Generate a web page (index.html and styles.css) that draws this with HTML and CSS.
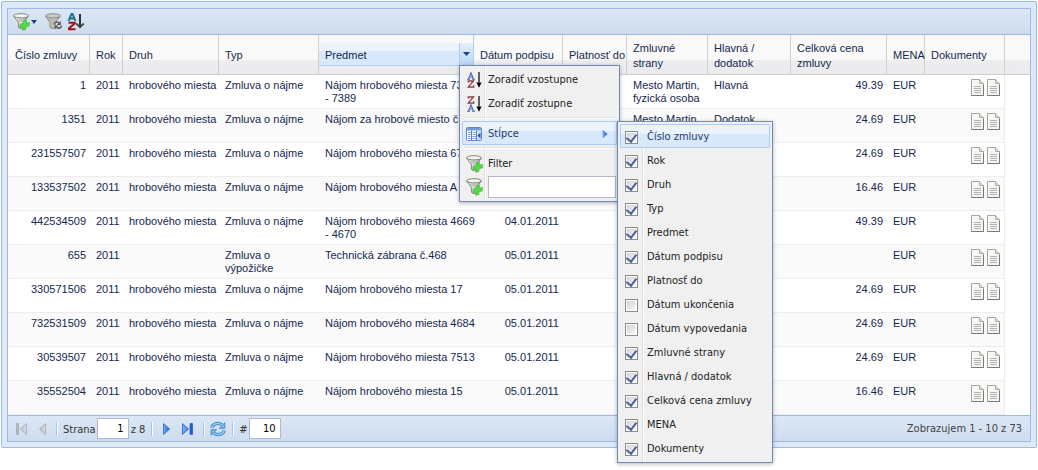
FILE: index.html
```html
<!DOCTYPE html>
<html lang="sk">
<head>
<meta charset="utf-8">
<title>Zmluvy</title>
<link rel="stylesheet" href="styles.css">
</head>
<body>
<svg class="defs" aria-hidden="true">
  <linearGradient id="g-funnel" x1="0" x2="1" y1="0" y2="0"><stop offset="0" stop-color="#fff"/><stop offset=".6" stop-color="#d4d4d0"/><stop offset="1" stop-color="#8e8e8a"/></linearGradient>
  <linearGradient id="g-blue" x1="0" x2="1" y1="0" y2="0"><stop offset="0" stop-color="#7db4f5"/><stop offset="1" stop-color="#1a4fc4"/></linearGradient>
  <linearGradient id="g-gray" x1="0" x2="1" y1="0" y2="0"><stop offset="0" stop-color="#b4b8be"/><stop offset="1" stop-color="#d8dbe0"/></linearGradient>
  <symbol id="funnel" viewBox="0 0 16 16">
    <path d="M.6 3 5.400 9.500V14l1 1.300h3.200l1-1.300V9.500L15.400 3z" fill="url(#g-funnel)" stroke="#858580"/>
    <ellipse cx="8" cy="2.800" rx="7.400" ry="2.100" fill="#f4f4f1" stroke="#858580"/>
    <path d="M4 6.200h6M5 8h4" stroke="#b4b4ae" fill="none"/>
  </symbol>
  <symbol id="funnel-add" viewBox="0 0 18 18">
    <use href="#funnel" width="16" height="16"/>
    <path d="M10.200 7.600l3.200-.6v3l3.200-.5-.4 3.600-3 .5-.4 3-3.200.6.3-3-3.200.5.400-3.600 3-.5z" fill="#55d84c" stroke="#3db536" stroke-width=".6"/>
  </symbol>
  <symbol id="funnel-refresh" viewBox="0 0 18 18">
    <path d="M.6 3 4.900 9.500V14l1 1.300h3.400l1-1.300V9.500L15.400 3z" fill="#bdbdb8" stroke="#8f8f8a"/>
    <ellipse cx="8" cy="2.800" rx="7.400" ry="2.100" fill="#c9c9c5" stroke="#8f8f8a"/>
    <path d="M9.200 11.500c0-2 2.500-3.200 4.600-1.800M16.500 12.500c0 2.200-2.600 3.400-4.800 2" fill="none" stroke="#666" stroke-width="1.700"/>
    <path d="M15.800 8v4h-4zM9.700 16.400v-4h4z" fill="#555"/>
  </symbol>
  <symbol id="sort-bold" viewBox="0 0 18 18">
    <path d="M1.500 8 4.500 1h1l3 7M2.800 5.500h4.500" fill="none" stroke="#18708c" stroke-width="1.900"/>
    <path d="M1.500 9.800h6.200v.8L2 15.300v.9h6.500" fill="none" stroke="#a01018" stroke-width="2"/>
    <path d="M13 1v13" stroke="#333" stroke-width="2"/><path d="M9.200 10.500 13 14.300l3.800-3.800" fill="none" stroke="#444" stroke-width="1.800"/>
  </symbol>
  <symbol id="letter-a" viewBox="0 0 8 8"><path d="M1.500 7 4 1l2.500 6M2.300 5h3M0 7.200h3M5 7.200h3M3 1h1.500" fill="none" stroke="#4564b0" stroke-width="1.100"/></symbol>
  <symbol id="letter-z" viewBox="0 0 8 8"><path d="M1.200 2.600V1h5.300L1.200 7h5.500V5.200" fill="none" stroke="#8e4149" stroke-width="1.300"/></symbol>
  <symbol id="arrow-down" viewBox="0 0 6 16"><path d="M3 0v12" stroke="#000" stroke-width="1.200"/><path d="M.3 10.200 3 11l2.700-.8L3 15.800z" fill="#000"/></symbol>
  <symbol id="columns" viewBox="0 0 16 14">
    <rect x=".5" y=".5" width="15" height="13" rx="1" fill="#fff" stroke="#6288c8"/>
    <path d="M1 1h14v2.500H1z" fill="#6f9be0"/><path d="M5.500 3.500V13M10.500 3.500V13" stroke="#5580cc"/>
    <path d="M2 5.500h2.500M2 7.500h2.500M2 9.500h2.500M2 11.500h2.500M6.500 5.500H10M6.500 7.500H10M6.500 9.500H10M6.500 11.500H10" stroke="#79a3dd"/>
    <path d="M11 4h4v9h-4z" fill="#cfe2fb"/><path d="M14.500 5.500v6L11.500 8.500z" fill="#1d50b8"/>
  </symbol>
  <symbol id="doc" viewBox="0 0 13 17">
    <path d="M.5.500h8l4 4v12H.500z" fill="#f7f7f5" stroke="#a4a49f"/><path d="M.5 16.500h12V6" fill="none" stroke="#777"/>
    <path d="M8.500.500v4h4" fill="#dce6d2" stroke="#a6b09c"/><path d="M3 7.500h7M3 9.500h7M3 11.500h7M3 13.500h7" stroke="#b3b1ab"/>
  </symbol>
  <symbol id="tri" viewBox="0 0 7 12"><path d="M.5.500 6.500 6 .5 11.500z"/></symbol>
  <symbol id="refresh" viewBox="0 0 16 16">
    <path d="M1.800 7C2.500 2.800 8 .8 11.800 3.800" fill="none" stroke="#2c77bd" stroke-width="3.200"/><path d="M1.800 7C2.500 2.800 8 .8 11.800 3.800" fill="none" stroke="#8fd0f5" stroke-width="1.700"/>
    <path d="M14.800 1.800v5.400H9.400z" fill="#78c0f0" stroke="#2c77bd" stroke-width=".8"/>
    <path d="M14.200 9C13.500 13.200 8 15.200 4.200 12.200" fill="none" stroke="#2c77bd" stroke-width="3.200"/><path d="M14.200 9C13.500 13.200 8 15.200 4.200 12.200" fill="none" stroke="#8fd0f5" stroke-width="1.700"/>
    <path d="M1.200 14.200V8.800h5.400z" fill="#78c0f0" stroke="#2c77bd" stroke-width=".8"/>
  </symbol>
</svg>

<main class="frame">
<div class="panel">
  <div class="toolbar">
    <button class="tool" type="button" aria-label="Pridať filter"><svg width="18" height="18"><use href="#funnel-add"/></svg><svg class="caret" width="6" height="4" viewBox="0 0 6 4"><path d="M0 0h6L3 4z" fill="#15428b"/></svg></button>
    <button class="tool" type="button" aria-label="Obnoviť filter"><svg width="18" height="18"><use href="#funnel-refresh"/></svg></button>
    <button class="tool" type="button" aria-label="Zoradiť"><svg width="18" height="18"><use href="#sort-bold"/></svg></button>
  </div>

  <table class="grid">
    <colgroup><col class="c-num"><col class="c-year"><col class="c-kind"><col class="c-type"><col class="c-subject"><col class="c-date"><col class="c-valid"><col class="c-party"><col class="c-main"><col class="c-price"><col class="c-cur"><col class="c-docs"><col></colgroup>
    <thead>
      <tr>
        <th>Číslo zmluvy</th><th>Rok</th><th>Druh</th><th>Typ</th>
        <th class="active">
          <div class="head-over"><span>Predmet</span><button class="trigger" type="button" aria-label="Ponuka stĺpca"><svg width="7" height="4" viewBox="0 0 7 4"><path d="M0 0h7L3.500 4z" fill="#15428b"/></svg></button></div>
          <div class="menu main-menu">
            <button class="item" type="button"><svg class="ico" width="18" height="18"><use href="#letter-a" x="1" y="1" width="8" height="8"/><use href="#letter-z" x="1" y="9" width="8" height="8"/><use href="#arrow-down" x="10" y="1" width="6" height="16"/></svg>Zoradiť vzostupne</button>
            <button class="item" type="button"><svg class="ico" width="18" height="18"><use href="#letter-z" x="1" y="1" width="8" height="8"/><use href="#letter-a" x="1" y="9" width="8" height="8"/><use href="#arrow-down" x="10" y="1" width="6" height="16"/></svg>Zoradiť zostupne</button>
            <hr>
            <div class="sub">
              <button class="item on" type="button"><svg class="ico" width="18" height="14"><use href="#columns" width="16" height="14"/></svg>Stĺpce<svg class="more" width="6" height="10" fill="url(#g-blue)"><use href="#tri"/></svg></button>
              <div class="menu sub-menu">
                <label class="item on"><input type="checkbox" checked>Číslo zmluvy</label>
                <label class="item"><input type="checkbox" checked>Rok</label>
                <label class="item"><input type="checkbox" checked>Druh</label>
                <label class="item"><input type="checkbox" checked>Typ</label>
                <label class="item"><input type="checkbox" checked>Predmet</label>
                <label class="item"><input type="checkbox" checked>Dátum podpisu</label>
                <label class="item"><input type="checkbox" checked>Platnosť do</label>
                <label class="item"><input type="checkbox">Dátum ukončenia</label>
                <label class="item"><input type="checkbox">Dátum vypovedania</label>
                <label class="item"><input type="checkbox" checked>Zmluvné strany</label>
                <label class="item"><input type="checkbox" checked>Hlavná / dodatok</label>
                <label class="item"><input type="checkbox" checked>Celková cena zmluvy</label>
                <label class="item"><input type="checkbox" checked>MENA</label>
                <label class="item"><input type="checkbox" checked>Dokumenty</label>
              </div>
            </div>
            <hr>
            <label class="item" for="filter"><svg class="ico" width="18" height="18"><use href="#funnel-add"/></svg>Filter</label>
            <div class="item field"><svg class="ico" width="18" height="18"><use href="#funnel-add"/></svg><input id="filter" type="text"></div>
          </div>
        </th>
        <th class="after">Dátum podpisu</th><th>Platnosť do</th><th>Zmluvné<br>strany</th><th>Hlavná /<br>dodatok</th><th>Celková cena<br>zmluvy</th><th>MENA</th><th>Dokumenty</th><th class="rest"></th>
      </tr>
    </thead>
    <tbody>
      <tr><td class="r">1</td><td>2011</td><td class="nw">hrobového miesta</td><td>Zmluva o nájme</td><td class="nw">Nájom hrobového miesta 7388<br>- 7389</td><td class="r"></td><td></td><td>Mesto Martin, fyzická osoba</td><td>Hlavná</td><td class="r">49.39</td><td>EUR</td><td class="docs"><svg><use href="#doc"/></svg><svg><use href="#doc"/></svg></td><td class="rest"></td></tr>
      <tr><td class="r">1351</td><td>2011</td><td class="nw">hrobového miesta</td><td>Zmluva o nájme</td><td class="nw">Nájom za hrobové miesto č.2</td><td class="r"></td><td></td><td>Mesto Martin</td><td>Dodatok</td><td class="r">24.69</td><td>EUR</td><td class="docs"><svg><use href="#doc"/></svg><svg><use href="#doc"/></svg></td><td class="rest"></td></tr>
      <tr><td class="r">231557507</td><td>2011</td><td class="nw">hrobového miesta</td><td>Zmluva o nájme</td><td class="nw">Nájom hrobového miesta 6760</td><td class="r"></td><td></td><td></td><td></td><td class="r">24.69</td><td>EUR</td><td class="docs"><svg><use href="#doc"/></svg><svg><use href="#doc"/></svg></td><td class="rest"></td></tr>
      <tr><td class="r">133537502</td><td>2011</td><td class="nw">hrobového miesta</td><td>Zmluva o nájme</td><td class="nw">Nájom hrobového miesta A 4</td><td class="r"></td><td></td><td></td><td></td><td class="r">16.46</td><td>EUR</td><td class="docs"><svg><use href="#doc"/></svg><svg><use href="#doc"/></svg></td><td class="rest"></td></tr>
      <tr><td class="r">442534509</td><td>2011</td><td class="nw">hrobového miesta</td><td>Zmluva o nájme</td><td class="nw">Nájom hrobového miesta 4669<br>- 4670</td><td class="r">04.01.2011</td><td></td><td></td><td></td><td class="r">49.39</td><td>EUR</td><td class="docs"><svg><use href="#doc"/></svg><svg><use href="#doc"/></svg></td><td class="rest"></td></tr>
      <tr><td class="r">655</td><td>2011</td><td></td><td>Zmluva o<br>výpožičke</td><td class="nw">Technická zábrana č.468</td><td class="r">05.01.2011</td><td></td><td></td><td></td><td></td><td>EUR</td><td class="docs"><svg><use href="#doc"/></svg><svg><use href="#doc"/></svg></td><td class="rest"></td></tr>
      <tr><td class="r">330571506</td><td>2011</td><td class="nw">hrobového miesta</td><td>Zmluva o nájme</td><td class="nw">Nájom hrobového miesta 17</td><td class="r">05.01.2011</td><td></td><td></td><td></td><td class="r">24.69</td><td>EUR</td><td class="docs"><svg><use href="#doc"/></svg><svg><use href="#doc"/></svg></td><td class="rest"></td></tr>
      <tr><td class="r">732531509</td><td>2011</td><td class="nw">hrobového miesta</td><td>Zmluva o nájme</td><td class="nw">Nájom hrobového miesta 4684</td><td class="r">05.01.2011</td><td></td><td></td><td></td><td class="r">24.69</td><td>EUR</td><td class="docs"><svg><use href="#doc"/></svg><svg><use href="#doc"/></svg></td><td class="rest"></td></tr>
      <tr><td class="r">30539507</td><td>2011</td><td class="nw">hrobového miesta</td><td>Zmluva o nájme</td><td class="nw">Nájom hrobového miesta 7513</td><td class="r">05.01.2011</td><td></td><td></td><td></td><td class="r">24.69</td><td>EUR</td><td class="docs"><svg><use href="#doc"/></svg><svg><use href="#doc"/></svg></td><td class="rest"></td></tr>
      <tr><td class="r">35552504</td><td>2011</td><td class="nw">hrobového miesta</td><td>Zmluva o nájme</td><td class="nw">Nájom hrobového miesta 15</td><td class="r">05.01.2011</td><td></td><td></td><td></td><td class="r">16.46</td><td>EUR</td><td class="docs"><svg><use href="#doc"/></svg><svg><use href="#doc"/></svg></td><td class="rest"></td></tr>
    </tbody>
  </table>

  <div class="pager">
    <button class="nav" type="button" aria-label="Prvá strana" disabled><svg width="11" height="12" fill="url(#g-gray)" stroke="#a3a8b0" stroke-width=".8"><path d="M.5.500h2v11h-2zM10.500.500 4.500 6l6 5.500z"/></svg></button>
    <button class="nav" type="button" aria-label="Predchádzajúca strana" disabled><svg width="7" height="12" fill="url(#g-gray)" stroke="#a3a8b0" stroke-width=".8"><path d="M6.500.500.500 6l6 5.500z"/></svg></button>
    <i class="sep"></i>
    <label for="page">Strana</label><input class="num" id="page" type="text" value="1"><span class="total">z 8</span>
    <i class="sep"></i>
    <button class="nav" type="button" aria-label="Ďalšia strana"><svg width="7" height="12" fill="url(#g-blue)" stroke="#2a5fcb" stroke-width=".8"><use href="#tri"/></svg></button>
    <button class="nav" type="button" aria-label="Posledná strana"><svg width="11" height="12" fill="url(#g-blue)" stroke="#2a5fcb" stroke-width=".8"><path d="M.5.500 6.500 6l-6 5.500zM8 .5h2.500v11H8z"/></svg></button>
    <i class="sep"></i>
    <button class="nav reload" type="button" aria-label="Obnoviť"><svg width="16" height="16"><use href="#refresh"/></svg></button>
    <i class="sep"></i>
    <label for="size">#</label><input class="num" id="size" type="text" value="10">
    <span class="status">Zobrazujem 1 - 10 z 73</span>
  </div>
</div>
</main>
</body>
</html>
```
FILE: styles.css
```css
* { box-sizing: border-box; }
:root {
  --ui: Tahoma, "DejaVu Sans Condensed", "Noto Sans", sans-serif;
  --grid: "Liberation Sans", Arial, sans-serif;
  --line: #99bbe8;
}
html { min-height: 100vh; background: #fff; }
body { min-height: 100vh; margin: 0; padding: 1px; font: 11px/13px var(--grid); color: #15284f; }
button { margin: 0; padding: 0; border: 0; background: none; font: inherit; color: inherit; }
svg { display: block; flex: none; }
.defs { position: absolute; width: 0; height: 0; }

.frame { padding: 6px 5px 5px; background: #dfe8f6; border: 1px solid var(--line); border-radius: 2px; }
.panel { border: 1px solid var(--line); background: #fff; }

.toolbar { display: flex; align-items: center; gap: 8px; height: 26px; padding: 0 5px; background: linear-gradient(#dbe7f5, #cedcee); border-bottom: 1px solid var(--line); }
.tool { display: flex; align-items: center; }
.tool + .tool + .tool { margin-left: -4px; }

.grid { width: 100%; table-layout: fixed; border-collapse: separate; border-spacing: 0; }
.c-num { width: 82px; }
.c-year { width: 33px; }
.c-kind { width: 96px; }
.c-type { width: 100px; }
.c-subject { width: 155px; }
.c-date { width: 89px; }
.c-valid { width: 64px; }
.c-party { width: 81px; }
.c-main { width: 83px; }
.c-price { width: 96px; }
.c-cur { width: 38px; }
.c-docs { width: 80px; }

th { height: 40px; padding: 2px 0 0 6px; text-align: left; vertical-align: middle; font-weight: normal; line-height: 15px; white-space: nowrap; background: linear-gradient(#f9f9f9 65%, #eeeeef 65%, #e8eaec); border-right: 1px solid #d0d0d0; border-bottom: 1px solid #d0d0d0; }
th:first-child { padding-left: 7px; }
th.rest { border-right: 0; }
th.active { position: relative; padding: 0; border-right-color: #aaccf6; }
.head-over { display: flex; height: 23px; padding-left: 6px; align-items: center; background: linear-gradient(#ebf3fd 8px, #d9e8fb 8px); border-bottom: 1px solid #aaccf6; }
.head-over span { padding-top: 2px; }
.trigger { display: grid; place-items: center; width: 14px; height: 22px; margin-left: auto; border-left: 1px solid #aaccf6; background: linear-gradient(#e4effd, #bcd6f8); }

td { height: 34px; padding: 4px 4px 3px 6px; vertical-align: top; border-bottom: 1px solid #ededed; }
tbody tr:nth-child(even) td { background: #fafafa; }
td.r { text-align: right; }
td.nw { white-space: nowrap; }
td.docs { border-right: 1px solid #ededed; text-align: right; white-space: nowrap; line-height: 0; }
td.docs svg { display: inline-block; width: 13px; height: 17px; margin-left: 3px; }
tbody tr td.rest { background: #fff; border: 0; }

.menu { position: absolute; z-index: 2; padding: 1px 2px 2px; font: 11px/14px var(--ui); color: #222; border: 1px solid #718bb7; background: linear-gradient(90deg, #f0f0f0 24px, #e0e0e0 24px, #e0e0e0 25px, #fff 25px, #fff 26px, #f0f0f0 26px); box-shadow: 0 1px 4px rgb(0 0 0 / 30%); }
.main-menu { left: 140px; top: 30px; width: 161px; }
.sub { position: relative; }
.sub-menu { left: 155px; top: 0; width: 156px; padding: 2px; z-index: 3; }
.item { display: flex; align-items: center; width: 100%; height: 24px; padding: 1px 3px 0; border: 1px solid transparent; text-align: left; }
.item.on { color: #233d6d; border-color: #aaccf6; background: linear-gradient(#ebf3fd 42%, #d9e8fb 42%); border-radius: 1px; }
.ico { margin-right: 4px; }
.more { margin: 0 5px 0 auto; }
.menu hr { height: 2px; margin: 2px 2px 2px 4px; border: 0; background: linear-gradient(#e0e0e0 1px, #fff 1px); }
.field { padding: 0 0 0 3px; }
.field input { flex: 1; min-width: 0; height: 22px; padding: 1px 3px; border: 1px solid #b5b8c8; background: #fff; font: inherit; }
.sub-menu input { appearance: none; flex: none; width: 13px; height: 13px; margin: 1px 9px 0 1px; border: 1px solid #8b8b8b; outline: 1px solid #fff; outline-offset: -2px; background: linear-gradient(135deg, #ccc, #fff); }
.sub-menu input:checked { display: grid; place-items: center; }
.sub-menu input:checked::before { content: ""; width: 5px; height: 8px; margin-bottom: 2px; border: solid #4a61a0; border-width: 0 2px 2px 0; transform: rotate(38deg); }

.pager { display: flex; align-items: center; height: 26px; padding: 0 8px; font: 11px/14px var(--ui); color: #333; background: linear-gradient(#dbe7f5, #cedcee); border-top: 1px solid var(--line); }
.pager label, .total { padding-top: 2px; }
.nav { display: grid; place-items: center; margin-right: 12px; }
.reload { margin-right: 8px; }
.sep { width: 2px; height: 14px; margin: 0 5px 0 -2px; background: linear-gradient(90deg, #98c8ff 1px, #fff 1px); }
.num { width: 32px; height: 21px; margin: 0 2px 0 1px; padding: 0 4px; border: 1px solid #b5b8c8; background: #fff; font: inherit; color: #000; text-align: right; }
.total { margin-right: 8px; }
.total + .sep { margin-right: 10px; }
.status { margin-left: auto; color: #444; }
```
